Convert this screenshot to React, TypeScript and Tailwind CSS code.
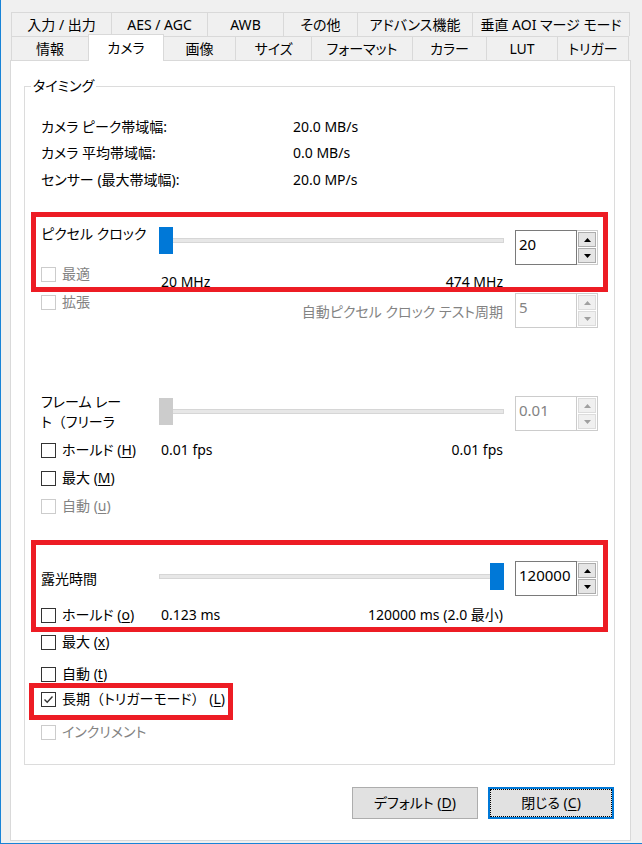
import React from 'react';

const row1 = [
  { label: '入力 / 出力', w: 'w-[100px]' },
  { label: 'AES / AGC', w: 'w-[96px]' },
  { label: 'AWB', w: 'w-[76px]' },
  { label: 'その他', w: 'w-[74px]' },
  { label: 'アドバンス機能', w: 'w-[115px]' },
  { label: '垂直 AOI マージ モード', w: 'w-[157px]' },
];

const row2 = [
  { label: '情報', w: 'w-[77px]' },
  { label: 'カメラ', w: 'w-[76px]', active: true },
  { label: '画像', w: 'w-[72px]' },
  { label: 'サイズ', w: 'w-[76px]' },
  { label: 'フォーマット', w: 'w-[101px]' },
  { label: 'カラー', w: 'w-[74px]' },
  { label: 'LUT', w: 'w-[71px]' },
  { label: 'トリガー', w: 'w-[71px]' },
];

const info = [
  { label: 'カメラ ピーク帯域幅:', value: '20.0 MB/s', h: 'h-[27px]' },
  { label: 'カメラ 平均帯域幅:', value: '0.0 MB/s', h: 'h-[26px]' },
  { label: 'センサー (最大帯域幅):', value: '20.0 MP/s', h: 'h-[27px]' },
];

const U = ({ children }: { children: React.ReactNode }) => (
  <span className="underline decoration-1 underline-offset-[2px]">{children}</span>
);

// full-width brackets keep their wide spacing, as in the original dialog
const P = ({ children }: { children: React.ReactNode }) => (
  <span className="[font-feature-settings:normal]">{children}</span>
);

interface CheckProps {
  label: React.ReactNode;
  checked?: boolean;
  disabled?: boolean;
}

const Check: React.FC<CheckProps> = ({ label, checked, disabled }) => (
  <div className="flex items-center h-[20px] leading-[20px] whitespace-nowrap">
    <span
      className={`w-[15px] h-[15px] shrink-0 border bg-white flex items-center justify-center ${disabled ? 'border-[#cccccc]' : 'border-[#333333]'}`}
    >
      {checked && (
        <svg width="13" height="13" viewBox="0 0 13 13">
          <polyline points="2.5,6.5 5.2,9.2 10.5,3.5" fill="none" stroke="#333333" strokeWidth="1.4" />
        </svg>
      )}
    </span>
    <span className={`ml-[6px] ${disabled ? 'text-[#838383]' : 'text-black'}`}>{label}</span>
  </div>
);

const Arrow = ({ up, color }: { up?: boolean; color: string }) => (
  <svg width="7" height="4" viewBox="0 0 7 4">
    <path d={up ? 'M3.5 0L7 4H0Z' : 'M0 0H7L3.5 4Z'} fill={color} />
  </svg>
);

const Spin = ({ value, disabled }: { value: string; disabled?: boolean }) => (
  <div className="flex w-[83px] h-[35px] shrink-0">
    <div
      className={`flex-1 border bg-white pl-[3px] pt-[3px] leading-[20px] text-[15px] ${disabled ? 'border-[#cccccc] text-[#838383]' : 'border-[#7a7a7a] text-black'}`}
    >
      {value}
    </div>
    <div className="w-[21px] flex flex-col gap-px p-px border-y border-r border-[#cccccc] bg-white">
      <div
        className={`flex-1 border flex items-center justify-center ${disabled ? 'border-[#dcdcdc] bg-[#f0f0f0]' : 'border-[#adadad] bg-[#e5e5e5]'}`}
      >
        <Arrow up color={disabled ? '#a0a0a0' : '#000000'} />
      </div>
      <div
        className={`flex-1 border flex items-center justify-center ${disabled ? 'border-[#dcdcdc] bg-[#f0f0f0]' : 'border-[#adadad] bg-[#e5e5e5]'}`}
      >
        <Arrow color={disabled ? '#a0a0a0' : '#000000'} />
      </div>
    </div>
  </div>
);

const Slider = ({ end, disabled }: { end?: boolean; disabled?: boolean }) => (
  <div className="relative w-[345px] h-[27px] flex items-center">
    <div className="w-full h-[5px] bg-[#e7e7e7] border border-[#d6d6d6]" />
    <div
      className={`absolute top-0 w-[14px] h-[27px] ${end ? 'right-0' : 'left-0'} ${disabled ? 'bg-[#cccccc]' : 'bg-[#0078d7]'}`}
    />
  </div>
);

const Range = ({ min, max }: { min: React.ReactNode; max: React.ReactNode }) => (
  <div className="w-[345px] flex justify-between pl-[2px] pr-[1px] leading-[20px] whitespace-nowrap">
    <span>{min}</span>
    <span>{max}</span>
  </div>
);

export default function App() {
  return (
    <div className="w-[642px] h-[844px] overflow-hidden bg-[#f0f0f0] border-l border-b border-[#1883d7] pl-[9px] pt-[12px] text-[14px] text-black [font-family:'Noto_Sans','Noto_Sans_CJK_JP',sans-serif] [font-feature-settings:'palt']">
      {/* Tabs */}
      <div className="ml-px flex h-[24px] border-l border-[#d9d9d9]">
        {row1.map(t => (
          <div key={t.label} className={`${t.w} border-t border-r border-[#d9d9d9] flex items-center justify-center leading-[20px] whitespace-nowrap`}>
            {t.label}
          </div>
        ))}
      </div>
      <div className="ml-px flex h-[24px] border-l border-[#d9d9d9]">
        {row2.map(t =>
          t.active ? (
            <div
              key={t.label}
              className={`${t.w} relative z-10 -ml-px -mt-[2px] h-[27px] bg-white border-t border-l border-r border-[#d9d9d9] flex items-center justify-center leading-[20px] whitespace-nowrap`}
            >
              {t.label}
            </div>
          ) : (
            <div key={t.label} className={`${t.w} border-t border-r border-[#d9d9d9] flex items-center justify-center leading-[20px] whitespace-nowrap`}>
              {t.label}
            </div>
          )
        )}
      </div>

      {/* Panel */}
      <div className="w-[621px] h-[781px] bg-white border border-[#d9d9d9]">
        <div className="relative ml-[13px] mt-[25px] w-[591px] h-[679px] border border-[#dcdcdc]">
          <span className="absolute -top-[11px] left-[6px] px-[2px] bg-white leading-[20px]">タイミング</span>

          <div className="mt-[26px] pl-[16px]">
            {info.map(r => (
              <div key={r.label} className={`${r.h} flex items-center leading-[20px] whitespace-nowrap`}>
                <span className="w-[252px]">{r.label}</span>
                <span>{r.value}</span>
              </div>
            ))}
          </div>

          {/* Pixel clock */}
          <div className="ml-[6px] mt-[19px] w-[577px] h-[80px] border-[5px] border-[#ed1c24] flex">
            <div className="w-[123px] pl-[5px] flex flex-col">
              <span className="mt-[7px] leading-[20px] whitespace-nowrap">ピクセル クロック</span>
              <div className="mt-[20px]">
                <Check label="最適" disabled />
              </div>
            </div>
            <div className="flex flex-col">
              <div className="mt-[10px]">
                <Slider />
              </div>
              <div className="mt-[18px]">
                <Range min="20 MHz" max="474 MHz" />
              </div>
            </div>
            <div className="ml-[11px] mt-[13px]">
              <Spin value="20" />
            </div>
          </div>

          <div className="pl-[16px] flex">
            <div className="w-[463px] flex items-start">
              <Check label="拡張" disabled />
              <span className="flex-1 mt-[10px] text-right pr-[1px] leading-[20px] text-[#838383] whitespace-nowrap">
                自動ピクセル クロック テスト周期
              </span>
            </div>
            <div className="ml-[11px] mt-px">
              <Spin value="5" disabled />
            </div>
          </div>

          {/* Frame rate */}
          <div className="mt-[64px] pl-[16px] flex">
            <div className="w-[118px] leading-[20px]">
              <div>フレーム レー</div>
              <div>ト<P>（</P>フリーラ</div>
            </div>
            <div className="mt-[6px]">
              <Slider disabled />
            </div>
            <div className="ml-[11px] mt-[4px]">
              <Spin value="0.01" disabled />
            </div>
          </div>
          <div className="mt-[8px] pl-[16px] flex">
            <div className="w-[118px]">
              <Check label={<>ホールド (<U>H</U>)</>} />
            </div>
            <Range min="0.01 fps" max="0.01 fps" />
          </div>
          <div className="mt-[8px] pl-[16px]">
            <Check label={<>最大 (<U>M</U>)</>} />
          </div>
          <div className="mt-[8px] pl-[16px]">
            <Check label={<>自動 (<U>u</U>)</>} disabled />
          </div>

          {/* Exposure */}
          <div className="ml-[6px] mt-[24px] w-[577px] h-[92px] border-[5px] border-[#ed1c24] flex">
            <div className="w-[123px] pl-[5px] flex flex-col">
              <span className="mt-[24px] leading-[20px] whitespace-nowrap">露光時間</span>
              <div className="mt-[16px]">
                <Check label={<>ホールド (<U>o</U>)</>} />
              </div>
            </div>
            <div className="flex flex-col">
              <div className="mt-[18px]">
                <Slider end />
              </div>
              <div className="mt-[15px]">
                <Range min="0.123 ms" max="120000 ms (2.0 最小)" />
              </div>
            </div>
            <div className="ml-[11px] mt-[16px]">
              <Spin value="120000" />
            </div>
          </div>

          <div className="pl-[16px]">
            <Check label={<>最大 (<U>x</U>)</>} />
          </div>
          <div className="mt-[12px] pl-[16px]">
            <Check label={<>自動 (<U>t</U>)</>} />
          </div>

          <div className="ml-[4px] -mt-px w-[204px] h-[37px] border-[5px] border-[#ed1c24] pl-[7px] pt-px">
            <Check checked label={<>長期<P>（</P>トリガーモード<P>）</P> (<U>L</U>)</>} />
          </div>

          <div className="mt-[2px] pl-[16px]">
            <Check label="インクリメント" disabled />
          </div>
        </div>

        {/* Buttons */}
        <div className="mt-[22px] pr-[16px] flex justify-end gap-[10px]">
          <button className="w-[126px] h-[32px] bg-[#e1e1e1] border border-[#adadad] flex items-center justify-center leading-[20px]">
            デフォルト (<U>D</U>)
          </button>
          <button className="w-[126px] h-[32px] bg-[#e1e1e1] border-2 border-[#0078d7] p-0">
            <span className="w-full h-full border border-dotted border-black flex items-center justify-center leading-[20px]">
              閉じる (<U>C</U>)
            </span>
          </button>
        </div>
      </div>
    </div>
  );
}
